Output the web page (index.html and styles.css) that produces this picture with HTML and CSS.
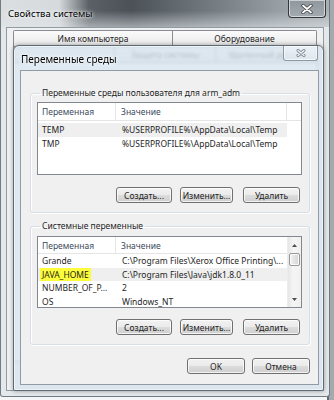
FILE: index.html
```html
<!DOCTYPE html>
<html lang="ru">
<head>
    <meta charset="UTF-8">
    <meta name="viewport" content="width=device-width, initial-scale=1.0">
    <title>Переменные среды</title>
    <link rel="stylesheet" href="styles.css">
</head>
<body>
    <div class="window sysprops">
        <div class="titlebar">
            <span class="title">Свойства системы</span>
            <span class="close-btn close-main">
                <svg width="12" height="10" viewBox="0 0 12 10">
                    <path d="M2 1.5 L10 8.5 M10 1.5 L2 8.5" stroke="#3a3f44" stroke-width="3.4" stroke-linecap="round"/>
                    <path d="M2 1.5 L10 8.5 M10 1.5 L2 8.5" stroke="#fff" stroke-width="1.8" stroke-linecap="round"/>
                </svg>
            </span>
        </div>
        <div class="client">
            <div class="tabs">
                <div class="tab tab-wide">Имя компьютера</div>
                <div class="tab tab-hw">Оборудование</div>
            </div>
            <div class="tabs">
                <!-- selected tab, hidden under the dialog title -->
                <div class="tab tab-third"></div>
                <div class="tab tab-third">Защита системы</div>
                <div class="tab tab-third">Удаленный доступ</div>
            </div>
            <div class="tabpane"></div>
        </div>
    </div>

    <div class="window envvars">
        <div class="titlebar">
            <span class="title">Переменные среды</span>
            <span class="close-btn close-dlg">
                <svg width="10" height="8" viewBox="0 0 10 8">
                    <path d="M2 1.5 L8 6.5 M8 1.5 L2 6.5" stroke="#7d8790" stroke-width="3" stroke-linecap="round"/>
                    <path d="M2 1.5 L8 6.5 M8 1.5 L2 6.5" stroke="#f4f6f8" stroke-width="1.4" stroke-linecap="round"/>
                </svg>
            </span>
        </div>
        <div class="client dlg-client">
            <fieldset class="group group-user">
                <legend>Переменные среды пользователя для arm_adm</legend>
                <div class="list list-user">
                    <div class="list-head">
                        <div class="col col-name">Переменная</div>
                        <div class="col col-value">Значение</div>
                        <div class="col col-fill"></div>
                    </div>
                    <div class="list-body">
                        <div class="row hover">
                            <div class="cell cell-name">TEMP</div>
                            <div class="cell">%USERPROFILE%\AppData\Local\Temp</div>
                        </div>
                        <div class="row">
                            <div class="cell cell-name">TMP</div>
                            <div class="cell">%USERPROFILE%\AppData\Local\Temp</div>
                        </div>
                    </div>
                </div>
                <div class="btn-row">
                    <button class="btn btn-new">Создать...</button>
                    <button class="btn btn-edit">Изменить...</button>
                    <button class="btn btn-del">Удалить</button>
                </div>
            </fieldset>

            <fieldset class="group group-sys">
                <legend>Системные переменные</legend>
                <div class="list list-sys">
                    <div class="list-main">
                        <div class="list-head">
                            <div class="col col-name">Переменная</div>
                            <div class="col col-value">Значение</div>
                        </div>
                        <div class="list-body">
                            <div class="row">
                                <div class="cell cell-name">Grande</div>
                                <div class="cell">C:\Program Files\Xerox Office Printing\...</div>
                            </div>
                            <div class="row hover">
                                <div class="cell cell-name"><span class="marker">JAVA_HOME</span></div>
                                <div class="cell">C:\Program Files\Java\jdk1.8.0_11</div>
                            </div>
                            <div class="row">
                                <div class="cell cell-name">NUMBER_OF_P...</div>
                                <div class="cell">2</div>
                            </div>
                            <div class="row">
                                <div class="cell cell-name">OS</div>
                                <div class="cell">Windows_NT</div>
                            </div>
                        </div>
                    </div>
                    <div class="scrollbar">
                        <div class="arrow">
                            <svg width="5" height="3" viewBox="0 0 5 3"><path d="M0 3 L2.5 0 L5 3 Z" fill="#4d4d4d"/></svg>
                        </div>
                        <div class="thumb"></div>
                        <div class="track"></div>
                        <div class="arrow">
                            <svg width="5" height="3" viewBox="0 0 5 3"><path d="M0 0 L2.5 3 L5 0 Z" fill="#4d4d4d"/></svg>
                        </div>
                    </div>
                </div>
                <div class="btn-row">
                    <button class="btn btn-new">Создать...</button>
                    <button class="btn btn-edit">Изменить...</button>
                    <button class="btn btn-del">Удалить</button>
                </div>
            </fieldset>

            <div class="dlg-buttons">
                <button class="btn btn-dlg">OK</button>
                <button class="btn btn-dlg">Отмена</button>
            </div>
        </div>
    </div>
</body>
</html>
```

FILE: styles.css
```css
* {
    box-sizing: border-box;
}

body {
    margin: 0;
    width: 334px;
    height: 400px;
    overflow: hidden;
    position: relative;
    font-family: "Noto Sans", "Open Sans", sans-serif;
    font-size: 8.5px;
    color: #1e1e1e;
    background: linear-gradient(90deg, #f4f5f6 0, #f4f5f6 327px, #62696e 327px, #62696e 329px, #a3aaae 329px);
}

/* windows on the desktop */
.window {
    position: absolute;
    display: flex;
    flex-direction: column;
}

.sysprops {
    left: 0;
    top: 0;
    width: 330px;
    height: 397px;
    border: 1px solid #727b82;
    border-top: none;
    border-radius: 0 0 3px 3px;
    background: #e4e8eb;
    padding: 0 5px 5px 5px;
}

.titlebar {
    display: flex;
    align-items: flex-start;
    flex: none;
}

.sysprops .titlebar {
    height: 27px;
    margin: 0 -5px;
    padding-left: 7px;
    background:
        linear-gradient(180deg, rgba(255,255,255,0) 40%, rgba(228,232,235,0.55) 100%),
        linear-gradient(90deg, #dadee1 0, #d6dadd 58px, #5a6066 88px, #4b5157 130px, #737b81 210px, #98a0a5 280px, #aab1b5 330px);
}

.title {
    color: #000;
    text-shadow: 0 0 5px #fff, 0 0 3px #fff;
}

.sysprops .title {
    font-size: 9.5px;
    line-height: 27px;
}

.close-btn {
    margin-left: auto;
    display: flex;
    align-items: center;
    justify-content: center;
}

.close-main {
    width: 38px;
    height: 18px;
    margin-right: 3px;
    border: 1px solid #34383c;
    border-top: none;
    border-radius: 0 0 4px 4px;
    background: linear-gradient(180deg, #8f979c, #a4abb0);
    box-shadow: inset 0 0 0 1px rgba(255,255,255,0.55);
}

.client {
    flex: 1;
    background: #f0f0f0;
    border: 1px solid #8f9ba5;
}

.sysprops .client {
    padding: 2px 6px 0 6px;
}

.tabs {
    display: flex;
    height: 16px;
}

.tab {
    border: 1px solid #898c95;
    border-bottom: none;
    margin-right: -1px;
    background: linear-gradient(180deg, #fbfbfb, #e8e8e8);
    text-align: center;
    line-height: 15px;
    font-size: 8.5px;
}

.tab-wide {
    width: 160px;
    border-radius: 2px 0 0 0;
}

.tab-hw {
    width: 145px;
    border-radius: 0 2px 0 0;
}

.tab-third {
    width: 102px;
}

.tabpane {
    height: 300px;
    width: 305px;
    border: 1px solid #898c95;
    background: #fff;
}

/* environment variables dialog */
.envvars {
    left: 13px;
    top: 45px;
    width: 311px;
    height: 346px;
    border: 1px solid #5d6b77;
    border-radius: 6px 6px 2px 2px;
    background: rgba(215, 228, 238, 0.82);
    backdrop-filter: blur(1.6px);
    padding: 0 4px 5px 6px;
    box-shadow: 0 0 4px rgba(0,0,0,0.35), inset 0 0 0 1px rgba(255,255,255,0.6);
}

.envvars .titlebar {
    height: 24px;
    margin: 0 -4px 0 -6px;
    padding-left: 7px;
}

.envvars .title {
    font-size: 10px;
    line-height: 27px;
}

.close-dlg {
    width: 35px;
    height: 15px;
    margin-right: 5px;
    border: 1px solid #8c98a3;
    border-top: none;
    border-radius: 0 0 3px 3px;
    background: linear-gradient(180deg, rgba(240,245,249,0.7), rgba(225,233,240,0.7));
    box-shadow: inset 0 0 0 1px rgba(255,255,255,0.6);
}

.dlg-client {
    display: flex;
    flex-direction: column;
    padding: 17px 8px 0 9px;
}

.group {
    margin: 0;
    padding: 4px 7px 9px 6px;
    min-width: 0;
    border: 1px solid #d5dfe5;
    border-radius: 3px;
    box-shadow: inset 1px 1px 0 #fff, 1px 1px 0 #fff;
}

.group legend {
    padding: 0 2px;
    margin-left: 3px;
    line-height: 10px;
    color: #1e1e1e;
}

.group-sys {
    margin-top: 8px;
    padding-top: 5px;
}

.list {
    background: #fff;
    border: 1px solid #828790;
    display: flex;
}

.list-user {
    height: 73px;
    flex-direction: column;
}

.list-sys {
    height: 72px;
}

.list-main {
    flex: 1;
    overflow: hidden;
}

.list-head {
    display: flex;
    height: 18px;
    border-bottom: 1px solid #e5e5e5;
    color: #3c4a5c;
}

.list-sys .list-head {
    height: 17px;
}

.col {
    line-height: 17px;
    border-right: 1px solid #e5e5e5;
}

.col-name {
    width: 78px;
    padding-left: 4px;
}

.col-value {
    width: 171px;
    padding-left: 5px;
}

.col-fill {
    flex: 1;
    border-right: none;
}

.list-sys .col-value {
    flex: 1;
    border-right: none;
}

.list-user .list-body {
    padding-top: 2px;
}

.row {
    display: flex;
    height: 14px;
    line-height: 14px;
    width: 249px;
    white-space: nowrap;
}

.list-sys .row {
    height: 13.5px;
    line-height: 13.5px;
}

.row.hover {
    background: #efefef;
}

.cell {
    padding-left: 6px;
}

.cell-name {
    width: 78px;
    padding-left: 4px;
}

.marker {
    display: inline-block;
    background: #fcfc3a;
    padding: 0 2px;
    margin-left: -2px;
}

.scrollbar {
    width: 14px;
    display: flex;
    flex-direction: column;
    align-items: center;
    background: linear-gradient(90deg, #e6e6e6, #f5f5f5 40%, #f0f0f0);
    border-left: 1px solid #ececec;
}

.arrow {
    height: 16px;
    display: flex;
    align-items: center;
    justify-content: center;
}

.thumb {
    width: 11px;
    height: 13px;
    border: 1px solid #979797;
    border-radius: 2px;
    background: linear-gradient(90deg, #f3f3f3, #e2e2e2 50%, #d6d6d6);
    box-shadow: inset 0 0 0 1px #fafafa;
}

.track {
    flex: 1;
}

.btn-row {
    display: flex;
    margin-top: 12px;
    padding-left: 79px;
    gap: 8px;
}

.group-sys .btn-row {
    margin-top: 11px;
}

.btn {
    height: 16px;
    padding: 0;
    font-family: inherit;
    font-size: 8.5px;
    color: #1e1e1e;
    border: 1px solid #707070;
    border-radius: 3px;
    background: linear-gradient(180deg, #f2f2f2 0, #ebebeb 48%, #dcdcdc 52%, #cfcfcf 100%);
    box-shadow: inset 0 0 0 1px rgba(255,255,255,0.75);
}

.btn-new {
    width: 56px;
}

.btn-edit {
    width: 53px;
}

.btn-del {
    width: 57px;
    margin-left: 2px;
}

.dlg-buttons {
    display: flex;
    justify-content: flex-end;
    gap: 7px;
    margin-top: 13px;
}

.btn-dlg {
    width: 58px;
    height: 16px;
}
```
